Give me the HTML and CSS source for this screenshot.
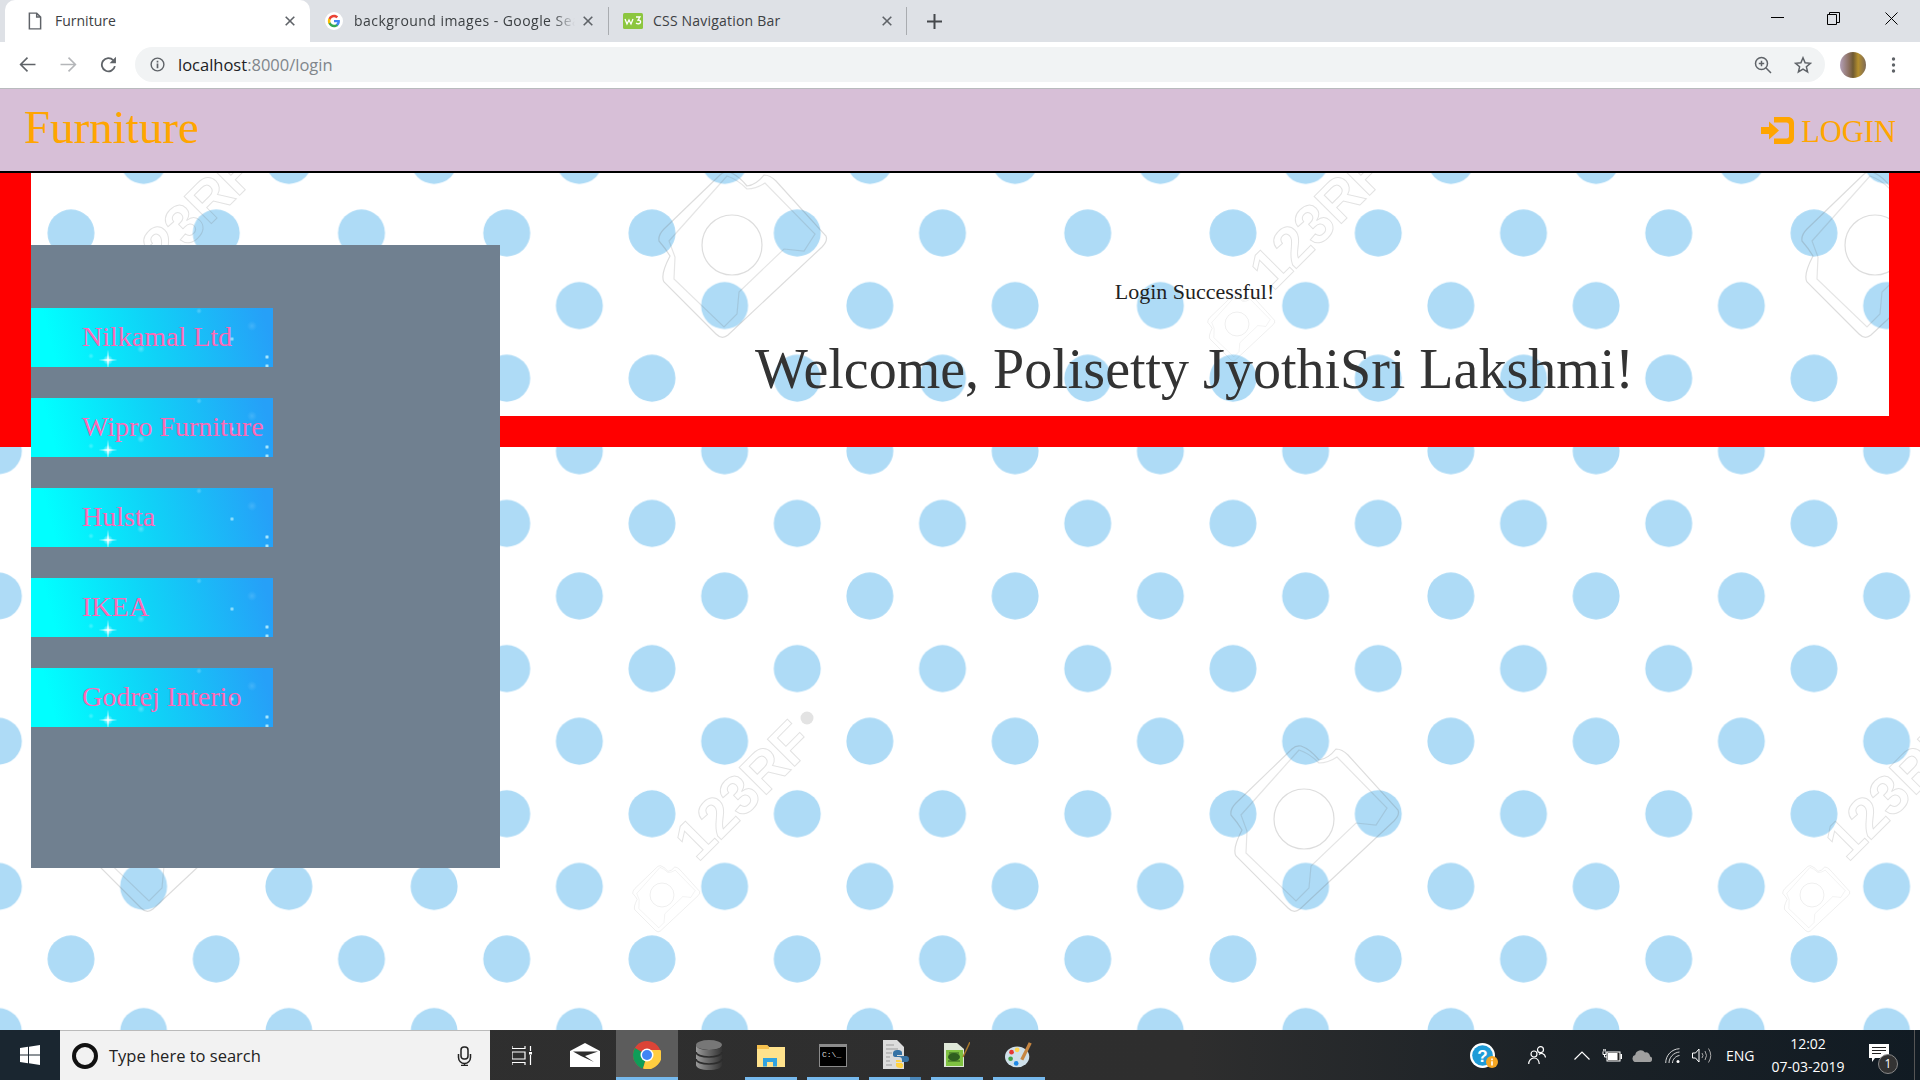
FILE: index.html
```html
<!DOCTYPE html>
<html lang="en">
<head>
<meta charset="utf-8">
<title>Furniture</title>
<link rel="stylesheet" href="styles.css">
</head>
<body>
<div class="chrome">
  <div class="tabstrip">
    <div class="tab tab-active">
      <svg class="tab-icon" viewBox="0 0 16 16"><path d="M3 1h6.500L13 4.500V15H3z M9.500 1v3.500H13" fill="none" stroke="#5f6368" stroke-width="1.300"/></svg>
      <span class="tab-title">Furniture</span>
      <svg class="tab-x" viewBox="0 0 10 10"><path d="M.7 .7l8.600 8.600M9.300 .7L.7 9.300" stroke="#5f6368" stroke-width="1.600"/></svg>
    </div>
    <div class="tab tab-google">
      <svg class="tab-icon" viewBox="0 0 48 48"><circle cx="24" cy="24" r="24" fill="#fff"/><g transform="translate(6 6) scale(.75)"><path fill="#4285f4" d="M45 24.500c0-1.600-.1-3.100-.4-4.500H24v8.500h11.800c-.5 2.700-2 5-4.400 6.600v5.500h7.100C42.700 36.700 45 31.100 45 24.500z"/><path fill="#34a853" d="M24 46c5.900 0 10.900-2 14.500-5.300l-7.100-5.500c-2 1.300-4.500 2.100-7.400 2.100-5.700 0-10.500-3.800-12.200-9H4.500v5.700C8.100 41.100 15.500 46 24 46z"/><path fill="#fbbc05" d="M11.800 28.300c-.4-1.300-.7-2.700-.7-4.300s.3-3 .7-4.300V14H4.500C3 16.900 2 20.400 2 24s1 7.100 2.500 10z"/><path fill="#ea4335" d="M24 10.700c3.200 0 6.100 1.100 8.400 3.300l6.300-6.300C34.900 4.200 29.900 2 24 2 15.500 2 8.100 6.900 4.500 14l7.300 5.700c1.700-5.200 6.500-9 12.200-9z"/></g></svg>
      <span class="tab-title tab-fade">background images - Google Search</span>
      <svg class="tab-x" viewBox="0 0 10 10"><path d="M.7 .7l8.600 8.600M9.300 .7L.7 9.300" stroke="#5f6368" stroke-width="1.600"/></svg>
    </div>
    <div class="tab tab-css">
      <svg class="tab-icon-w3" viewBox="0 0 20 16"><rect width="20" height="16" rx="1.500" fill="#8cc63f"/><path d="M2 6l2 5 2-4 2 4 2-5M13 4h4l-2 3c2 0 3 1 2.500 2.500-.5 1.500-3 1.700-4.500.5" fill="none" stroke="#fff" stroke-width="1.300"/></svg>
      <span class="tab-title tab-title-wide">CSS Navigation Bar</span>
      <svg class="tab-x" viewBox="0 0 10 10"><path d="M.7 .7l8.600 8.600M9.300 .7L.7 9.300" stroke="#5f6368" stroke-width="1.600"/></svg>
    </div>
    <svg class="tab-plus" viewBox="0 0 15 15"><path d="M7.500 0v15M0 7.500h15" stroke="#45484c" stroke-width="2"/></svg>
    <div class="win-controls">
      <svg class="win-ico win-min" viewBox="0 0 13 13"><path d="M0 5.500h13" stroke="#000" stroke-width="1"/></svg>
      <svg class="win-ico win-max" viewBox="0 0 13 13"><path d="M.5 2.500h9v10h-9zM2.500 2.500V.5h10v10h-3" fill="none" stroke="#000" stroke-width="1"/></svg>
      <svg class="win-ico" viewBox="0 0 13 13"><path d="M.5 .5l12 12M12.500 .5l-12 12" stroke="#000" stroke-width="1" fill="none"/></svg>
    </div>
  </div>
  <div class="toolbar">
    <svg class="tool-ico" viewBox="0 0 16 16"><path d="M15.500 8H1.500M8 1.500L1.500 8 8 14.500" fill="none" stroke="#5f6368" stroke-width="1.500"/></svg>
    <svg class="tool-ico" viewBox="0 0 16 16"><path d="M.5 8h14M8 1.500L14.500 8 8 14.500" fill="none" stroke="#b4b6b9" stroke-width="1.500"/></svg>
    <svg class="tool-ico tool-reload" viewBox="0 0 16 16"><path d="M14 9.500a6.200 6.200 0 1 1-1.500-5.500" fill="none" stroke="#5f6368" stroke-width="1.700"/><path d="M15 .8v6h-6z" fill="#5f6368"/></svg>
    <div class="omnibox">
      <svg class="omni-info" viewBox="0 0 16 16"><circle cx="8" cy="8" r="6.800" fill="none" stroke="#5f6368" stroke-width="1.500"/><path d="M7.100 7h1.800v5H7.100zM7.100 4h1.800v1.800H7.100z" fill="#5f6368"/></svg>
      <span class="url"><span class="url-host">localhost</span>:8000/login</span>
      <span class="omni-space"></span>
      <svg class="omni-ico" viewBox="0 0 18 18"><circle cx="7.500" cy="7.500" r="6" fill="none" stroke="#5f6368" stroke-width="1.500"/><path d="M11.800 11.800L17 17M4.800 7.500h5.400M7.500 4.800v5.400" stroke="#5f6368" stroke-width="1.500"/></svg>
      <svg class="omni-ico" viewBox="0 0 18 18"><path d="M9 1.800l2.100 5 5.300.5-4 3.500 1.200 5.200L9 13.200l-4.600 2.800 1.200-5.200-4-3.500 5.300-.5z" fill="none" stroke="#5f6368" stroke-width="1.500"/></svg>
    </div>
    <div class="avatar"></div>
    <svg class="tool-menu" viewBox="0 0 4 16"><circle cx="2" cy="2" r="1.700" fill="#5f6368"/><circle cx="2" cy="8" r="1.700" fill="#5f6368"/><circle cx="2" cy="14" r="1.700" fill="#5f6368"/></svg>
  </div>
</div>

<nav class="site-nav">
  <a class="brand">Furniture</a>
  <a class="login-link">
    <svg class="login-ico" viewBox="0 0 33 27"><path d="M0 10h8V4.500L18 13.500 8 22.500V17H0z" fill="#ffa500"/><path d="M13 0h14c3.500 0 6 2.500 6 6v15c0 3.500-2.500 6-6 6H13v-5.500h12.500c1.500 0 2.500-1 2.500-2.500V8c0-1.500-1-2.500-2.500-2.500H13z" fill="#ffa500"/></svg>
    <span>LOGIN</span>
  </a>
</nav>

<main class="page">
  <svg class="wallpaper" aria-hidden="true">
    <defs>
      <pattern id="dots" x="71" y="60" width="145.250" height="145.200" patternUnits="userSpaceOnUse">
        <circle cx="0" cy="0" r="23.500" fill="#aedbf6"/>
        <circle cx="145.250" cy="0" r="23.500" fill="#aedbf6"/>
        <circle cx="0" cy="145.200" r="23.500" fill="#aedbf6"/>
        <circle cx="145.250" cy="145.200" r="23.500" fill="#aedbf6"/>
        <circle cx="72.625" cy="72.600" r="23.500" fill="#aedbf6"/>
      </pattern>
      <g id="stamp" fill="none" stroke="#6f6f6f" stroke-opacity=".24" stroke-width="1.200">
        <path d="M-3 -73Q6 -70 15 -59Q24 -60 32 -70Q38 -70 44 -64L94 -9Q96 -4 90 2L-4 90Q-10 95 -16 89L-68 37Q-72 30 -62 11Q-66 4 -73 -4Q-74 -10 -68 -16L-12 -70Q-8 -74 -3 -73z"/>
        <path d="M-5 -69Q5 -66 15 -56Q24 -56 33 -62L83 -11L72 6L52 4L7 47L5 69L-8 82L-58 34L-57 12L-63 -4z" stroke-opacity=".18"/>
        <circle cx="0" cy="0" r="30"/>
      </g>
      <g id="brandmark">
        <use href="#stamp" transform="scale(.4)"/>
        <text x="36" y="-32" class="mark-text" textLength="167" lengthAdjust="spacingAndGlyphs" transform="rotate(-45 36 -32)">123RF</text>
        <circle cx="145" cy="-177" r="6.500" fill="#e3e3e3"/>
      </g>
    </defs>
    <rect width="100%" height="100%" fill="url(#dots)"/>
    <use href="#stamp" x="732" y="72"/>
    <use href="#stamp" x="1304" y="646"/>
    <use href="#stamp" x="1875" y="72"/>
    <use href="#stamp" x="157" y="646"/>
    <use href="#brandmark" x="662" y="722"/>
    <use href="#brandmark" x="1237" y="151"/>
    <use href="#brandmark" x="1812" y="722"/>
    <use href="#brandmark" x="107" y="151"/>
  </svg>

  <section class="welcome-panel">
    <p class="flash">Login Successful!</p>
    <h1 class="welcome">Welcome, Polisetty JyothiSri Lakshmi!</h1>
  </section>

  <aside class="sidebar">
    <a class="brand-link">Nilkamal Ltd</a>
    <a class="brand-link">Wipro Furniture</a>
    <a class="brand-link">Hulsta</a>
    <a class="brand-link">IKEA</a>
    <a class="brand-link">Godrej Interio</a>
  </aside>
</main>

<footer class="taskbar">
  <div class="start">
    <svg class="start-ico" viewBox="0 0 20 20"><path d="M0 3l8-1.200V9.500H0zM9 1.700L20 0v9.500H9zM0 10.500h8v7.700L0 17zM9 10.500h11V20L9 18.300z" fill="#fff"/></svg>
  </div>
  <div class="searchbox">
    <span class="cortana"></span>
    <span class="search-text">Type here to search</span>
    <svg class="mic" viewBox="0 0 14 20"><rect x="3.500" y="1" width="7" height="12" rx="3" fill="none" stroke="#222" stroke-width="1.500"/><path d="M1 8v3.500a6 6 0 0 0 12 0V8M7 17.500V19.500M3.500 19.500h7" fill="none" stroke="#222" stroke-width="1.500"/></svg>
  </div>
  <div class="task-slot slot-first">
    <svg class="i-task" viewBox="0 0 20 19"><path d="M0 0v2.500h13V0M0 6h13v7H0zM0 19v-2.500h13V19M18.500 0v5M18.500 9v10" fill="none" stroke="#fff" stroke-width="1.200"/><rect x="17" y="6" width="3" height="2.500" fill="#fff"/></svg>
  </div>
  <div class="task-slot">
    <svg class="i-mail" viewBox="0 0 30 24"><path d="M0 8L15 0l15 8v16H0z" fill="#fff"/><path d="M3 8.500h25L15 13l9 6-13-6z" fill="#2d2d2d"/></svg>
  </div>
  <div class="task-slot slot-active">
    <svg class="i-28" viewBox="0 0 28 28"><circle cx="14" cy="14" r="14" fill="#db4437"/><path d="M14 14L2 7A14 14 0 0 0 10 27.500z" fill="#0f9d58"/><path d="M14 14L10 27.500A14 14 0 0 0 27.500 9H14z" fill="#ffcd40"/><circle cx="14" cy="14" r="6.500" fill="#fff"/><circle cx="14" cy="14" r="5" fill="#4285f4"/></svg>
  </div>
  <div class="task-slot">
    <svg class="i-db" viewBox="0 0 28 30"><defs><linearGradient id="dbgrad"><stop offset="0" stop-color="#9a9a9a"/><stop offset=".45" stop-color="#6a6a6a"/><stop offset="1" stop-color="#333"/></linearGradient></defs><ellipse cx="14" cy="5" rx="13" ry="5" fill="#777"/><path d="M1 5v20c0 3 6 5 13 5s13-2 13-5V5c0 3-6 5-13 5S1 8 1 5z" fill="url(#dbgrad)"/><path d="M1 12c0 3 6 5 13 5s13-2 13-5M1 19c0 3 6 5 13 5s13-2 13-5" fill="none" stroke="#2d2d2d" stroke-width="1.600"/></svg>
  </div>
  <div class="task-slot slot-open">
    <svg class="i-folder" viewBox="0 0 28 23"><path d="M0 1h10l2 2h16v20H0z" fill="#ffe28c"/><path d="M0 1h10l2 2v2H0z" fill="#f5c04d"/><path d="M6 22.500V14h14v8.500h-4V18h-6v4.500z" fill="#31a3e0"/></svg>
  </div>
  <div class="task-slot slot-open">
    <svg class="i-cmd" viewBox="0 0 28 23"><rect width="28" height="23" fill="#8b8b8b"/><rect x="1" y="3" width="26" height="19" fill="#000"/><text x="3" y="13" class="cmd-text">C:\_</text></svg>
  </div>
  <div class="task-slot slot-open slot-stacked">
    <svg class="i-py" viewBox="0 0 27 30"><path d="M1 0h14l7 7v22H1z" fill="#dcdcdc"/><path d="M4 5h8M4 9h12M4 13h6M4 17h4M4 21h4M4 25h6" stroke="#9b9b9b"/><path d="M15 10c5 0 5 2 5 3v2h-5v1h8c2 0 4 0 4 3s-2 3-4 3h-3v-2c0-2-1-3-3-3h-4c-1 0-2-1-2-2v-2c0-2 2-3 4-3z" fill="#3773a5"/><path d="M20 28c-5 0-6-1-6-3v-2h6v-1h-6v-2h3c2 0 3 1 3 3v1h1v2c0 1-1 2-1 2z" fill="#ffd343"/></svg>
  </div>
  <div class="task-slot slot-open">
    <svg class="i-np" viewBox="0 0 26 26"><path d="M0 1h13l7 6v18H0z" fill="#dfe8d8"/><path d="M2 8h17v16H2z" fill="#7fc241"/><ellipse cx="10" cy="15" rx="6" ry="4" fill="#2f5f1f"/><path d="M5 11h10M4 19h12" stroke="#2f5f1f"/><path d="M19 15L26 0" stroke="#a5762a" stroke-width="1.500"/></svg>
  </div>
  <div class="task-slot slot-open">
    <svg class="i-28" viewBox="0 0 30 30"><ellipse cx="13" cy="17" rx="13" ry="11" fill="#cfe0ea"/><circle cx="7" cy="12" r="2.500" fill="#e53935"/><circle cx="13" cy="9.500" r="2.500" fill="#ffd54f"/><circle cx="6" cy="19" r="2.500" fill="#43a047"/><circle cx="12" cy="24" r="2.500" fill="#1e88e5"/><path d="M18 20L27 2" stroke="#c68642" stroke-width="3.500"/></svg>
  </div>
  <div class="tray">
    <svg class="help" viewBox="0 0 28 25"><circle cx="12.500" cy="12.500" r="12.500" fill="#fff"/><circle cx="12.500" cy="12.500" r="10.300" fill="#1e9bd7"/><text x="12.500" y="18.500" class="help-q">?</text><circle cx="22" cy="19" r="6" fill="#f5a623"/><path d="M21.200 18.200h1.600v4.300h-1.600zM21.200 15.500h1.600v1.700h-1.600z" fill="#fff"/></svg>
    <svg class="tray-ico people" viewBox="0 0 18 18"><circle cx="12.500" cy="3.700" r="3" fill="none" stroke="#fff" stroke-width="1.200"/><circle cx="6" cy="8" r="3" fill="none" stroke="#fff" stroke-width="1.200"/><path d="M.7 18c0-3 2-6 5.300-6s5 3 5.300 6M11 8.500c2-2 6-1 6.500 3" fill="none" stroke="#fff" stroke-width="1.200"/></svg>
    <svg class="tray-ico caret" viewBox="0 0 16 9"><path d="M.5 8.500L8 1l7.500 7.500" fill="none" stroke="#fff" stroke-width="1.200"/></svg>
    <svg class="tray-ico battery" viewBox="0 0 20 13"><path d="M1 2.500v3h3v-3M2.500 5.500V8H5M1.800 0v2.500M3.200 0v2.500" fill="none" stroke="#fff"/><rect x="4.500" y="2.500" width="14" height="10" fill="#fff"/><rect x="5.500" y="3.500" width="12" height="8" fill="#222"/><rect x="6" y="4" width="9.500" height="7" fill="#fff"/><rect x="18.500" y="5" width="1.500" height="5" fill="#fff"/></svg>
    <svg class="tray-ico cloud" viewBox="0 0 20 13"><path d="M4 13a3.500 3.500 0 0 1-.8-6.900A5.500 5.500 0 0 1 13 3.500a4 4 0 0 1 5 4A2.800 2.800 0 0 1 17 13z" fill="#a0a0a0"/></svg>
    <svg class="tray-ico wifi" viewBox="0 0 16 15"><path d="M.7 15C.7 7.500 6.500 1 14.500 .7M4 15C4 9.500 8.500 4.500 14.500 4M7.500 15c0-3.500 3-7 7-7.500" fill="none" stroke="#e6e6e6" stroke-width=".9"/><circle cx="13" cy="13.500" r="1.500" fill="#fff"/></svg>
    <svg class="tray-ico vol" viewBox="0 0 20 15"><path d="M.5 5H3.500L7 1v13L3.500 10H.5z" fill="none" stroke="#fff"/><path d="M10 5q2 2.500 0 5M13 3q3 4.500 0 9M16.500 .5q4.500 7 0 14" fill="none" stroke="#a9a9a9"/></svg>
    <span class="lang">ENG</span>
    <div class="clock"><span>12:02</span><span>07-03-2019</span></div>
    <div class="notif">
      <svg class="notif-ico" viewBox="0 0 20 18"><path d="M0 0h20v14H6l-3 4v-4H0z" fill="#fff"/><path d="M3 3.500h14M3 6.500h14M3 9.500h9" stroke="#222"/></svg>
      <span class="notif-badge">1</span>
    </div>
  </div>
</footer>
</body>
</html>
```

FILE: styles.css
```css
* { box-sizing: border-box; }
html, body { margin: 0; height: 100%; }
body {
  width: 1920px;
  height: 1080px;
  display: flex;
  flex-direction: column;
  overflow: hidden;
  font-family: "Liberation Serif", "Times New Roman", serif;
  background: #fff;
}

/* browser chrome */
.chrome { flex: none; height: 89px; font-family: "Open Sans", "Noto Sans", sans-serif; }
.tabstrip { height: 42px; background: #dee1e6; display: flex; align-items: center; position: relative; }
.tab { height: 42px; display: flex; align-items: center; color: #3c4043; position: relative; }
.tab-active { width: 305px; margin-left: 5px; background: #fff; border-radius: 10px 10px 0 0; padding: 0 15px 1px 21px; }
.tab-google { width: 298px; padding: 0 15px 1px 15px; }
.tab-css { width: 299px; padding: 0 14px 1px 14px; border-left: 1px solid #a9acb0; border-right: 1px solid #a9acb0; height: 28px; }
.tab-icon { width: 18px; height: 18px; margin-right: 11px; flex: none; }
.tab-icon-w3 { width: 20px; height: 16px; margin-right: 10px; flex: none; }
.tab-title { flex: 1; white-space: nowrap; overflow: hidden; font-size: 14px; }
.tab-title-wide { letter-spacing: .2px; }
.tab-fade { letter-spacing: .45px; -webkit-mask-image: linear-gradient(90deg, #000 90%, transparent); mask-image: linear-gradient(90deg, #000 90%, transparent); }
.tab-x { flex: none; width: 10px; height: 10px; margin-left: 8px; }
.tab-plus { width: 15px; height: 15px; margin-left: 20px; flex: none; }
.win-controls { margin-left: auto; display: flex; padding-right: 22px; align-self: flex-start; padding-top: 12px; }
.win-ico { width: 13px; height: 13px; display: block; }
.win-min { margin-right: 43px; }
.win-max { margin-right: 45px; }

.toolbar { height: 47px; background: #fff; border-bottom: 1px solid #b9bbbe; display: flex; align-items: center; padding: 0 0 1px 19px; }
.tool-ico { width: 17px; height: 17px; margin-right: 23.500px; flex: none; }
.tool-reload { margin-right: 18px; }
.omnibox { flex: none; width: 1690px; height: 35px; background: #f1f3f4; border-radius: 18px; display: flex; align-items: center; padding: 0 13px 0 15px; }
.omni-info { width: 15px; height: 15px; margin-right: 13px; }
.url { font-size: 16.500px; color: #80868b; }
.url-host { color: #202124; }
.omni-space { flex: 1; }
.omni-ico { width: 18px; height: 18px; margin-left: 22px; flex: none; }
.avatar { width: 26px; height: 26px; border-radius: 50%; margin-left: 15px; flex: none; background: linear-gradient(90deg, #b3a0b8 0%, #8b6f5e 35%, #6f5a32 50%, #b48f2e 70%, #7d6a58 100%); }
.tool-menu { width: 5px; height: 16px; margin-left: 25px; flex: none; }

/* site navbar */
.site-nav { flex: none; height: 84px; background: #d7bfd7; border-bottom: 2px solid #000; display: flex; align-items: center; justify-content: space-between; padding: 0 24px 0 24px; }
.brand { font-size: 47px; color: #ffa500; line-height: 1; margin-top: -5px; }
.login-link { display: flex; align-items: center; color: #ffa500; font-size: 30.500px; margin-top: 5px; }
.login-ico { width: 33px; height: 27px; margin-right: 7px; margin-top: -4px; }

/* page */
.page { flex: none; height: 857px; position: relative; overflow: hidden; }
.wallpaper { position: absolute; top: 0; left: 0; width: 100%; height: 100%; display: block; }
.mark-text { font-family: "Liberation Sans", sans-serif; font-size: 56px; font-weight: 700; fill: none; stroke: #6f6f6f; stroke-opacity: .2; stroke-width: 1; }
.welcome-panel { position: relative; height: 274px; border: solid #f00; border-width: 0 31px 31px 31px; padding: 0 0 0 469px; display: flex; flex-direction: column; align-items: center; }
.flash { margin: 106px 0 0; font-size: 22px; line-height: 26px; color: #222; }
.welcome { margin: 31px 0 0; font-size: 56px; font-weight: 400; line-height: 66px; color: #333; white-space: nowrap; }
.sidebar { position: absolute; left: 31px; top: 72px; width: 469px; height: 623px; background: #708090; display: flex; flex-direction: column; gap: 31px; padding-top: 63px; }
.brand-link {
  position: relative;
  width: 242px; height: 59px;
  display: flex; align-items: center;
  padding: 0 0 1px 51px;
  font-size: 28px; color: #ff69b4; white-space: nowrap;
  background:
    radial-gradient(ellipse 10px 1.500px at 77px 52px, #fff, transparent),
    radial-gradient(ellipse 1.500px 11px at 77px 52px, #fff, transparent),
    radial-gradient(circle 5px at 77px 52px, rgba(255,255,255,.75), transparent),
    radial-gradient(circle 2.500px at 236px 49px, #d8ffff, transparent),
    radial-gradient(circle 2.500px at 236px 58px, #d8ffff, transparent),
    radial-gradient(circle 2.500px at 201px 31px, rgba(220,255,255,.8), transparent),
    radial-gradient(circle 4px at 110px 41px, rgba(255,255,255,.3), transparent),
    radial-gradient(circle 3px at 168px 3px, rgba(255,255,255,.25), transparent),
    radial-gradient(circle 5px at 221px 18px, rgba(255,255,255,.14), transparent),
    radial-gradient(circle 3px at 60px 48px, rgba(255,255,255,.25), transparent),
    linear-gradient(75deg, #00ffff 10%, #10d2f7 50%, #26a0f8 96%);
}

/* taskbar */
.taskbar { flex: none; height: 50px; display: flex; align-items: stretch; background: linear-gradient(90deg, #2f2f2f 0%, #2e2e2e 62%, #1c2227 80%, #111b23 100%); font-family: "Open Sans", "Noto Sans", sans-serif; color: #fff; }
.start { width: 60px; display: flex; align-items: center; justify-content: center; background: #1a2630; }
.start-ico { width: 20px; height: 20px; display: block; }
.searchbox { width: 430px; background: #f2f2f2; border-top: 1px solid #bbb; display: flex; align-items: center; padding: 0 18px 0 12px; color: #222; }
.cortana { width: 26px; height: 26px; border: 4px solid #111; border-radius: 50%; margin-right: 11px; flex: none; }
.search-text { flex: 1; font-size: 16.500px; }
.mic { width: 15px; height: 20px; }
.task-slot { width: 62px; display: flex; align-items: center; justify-content: center; position: relative; }
.slot-first { width: 64px; }
.slot-active { background: #5c5c5c; }
.slot-open::after { content: ""; position: absolute; left: 5px; right: 5px; bottom: 0; height: 3px; background: #76b9ed; }
.slot-active::after { content: ""; position: absolute; left: 0; right: 0; bottom: 0; height: 3px; background: #76b9ed; }
.slot-stacked::before { content: ""; position: absolute; right: 5px; bottom: 0; width: 11px; height: 3px; background: #4a86b8; z-index: 1; }
.i-task { width: 20px; height: 19px; }
.i-mail { width: 30px; height: 24px; }
.i-28 { width: 28px; height: 28px; }
.i-db { width: 28px; height: 30px; }
.i-folder { width: 28px; height: 23px; }
.i-cmd { width: 28px; height: 23px; }
.i-py { width: 27px; height: 30px; }
.i-np { width: 26px; height: 26px; }
.cmd-text { font-family: "Liberation Mono", monospace; font-size: 8px; fill: #ddd; }
.tray { margin-left: auto; display: flex; align-items: center; }
.help { width: 28px; height: 25px; margin-right: 30px; flex: none; }
.help-q { font-family: "Liberation Sans", sans-serif; font-size: 17px; font-weight: 700; fill: #fff; text-anchor: middle; }
.tray-ico { display: block; flex: none; }
.people { width: 18px; height: 18px; margin-right: 28px; }
.caret { width: 16px; height: 9px; margin-right: 12px; }
.battery { width: 20px; height: 13px; margin-right: 10px; }
.cloud { width: 20px; height: 13px; margin-right: 13px; }
.wifi { width: 16px; height: 15px; margin-right: 11px; }
.vol { width: 20px; height: 15px; margin-right: 14px; }
.lang { font-size: 14px; width: 27px; margin-right: 17px; white-space: nowrap; }
.clock { display: flex; flex-direction: column; align-items: center; font-size: 14px; line-height: 23px; width: 76px; margin-right: 23px; white-space: nowrap; }
.notif { position: relative; width: 46px; height: 50px; margin-right: 5px; display: flex; align-items: center; border-right: 1px solid #555; }
.notif-ico { width: 20px; height: 18px; margin-top: -5px; }
.notif-badge { position: absolute; left: 9px; top: 24px; width: 20px; height: 20px; border-radius: 50%; background: #333; border: 1px solid #888; font-size: 12px; line-height: 18px; text-align: center; }
```
